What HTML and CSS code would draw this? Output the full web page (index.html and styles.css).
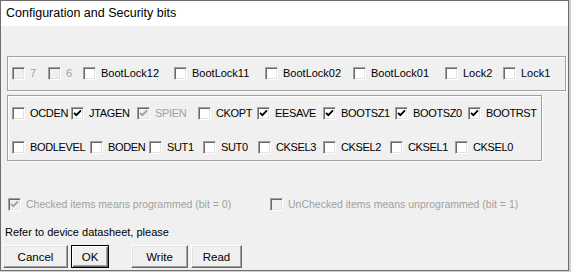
FILE: index.html
```html
<!DOCTYPE html>
<html lang="en">
<head>
    <meta charset="UTF-8">
    <title>Configuration and Security bits</title>
    <link rel="stylesheet" href="styles.css">
</head>
<body>
    <div class="window">
        <div class="titlebar">Configuration and Security bits</div>
        <div class="client">
            <div class="group lock-group">
                <div class="bits lock-bits">
                    <label class="bit disabled"><span class="box"></span>7</label>
                    <label class="bit disabled"><span class="box"></span>6</label>
                    <label class="bit"><span class="box"></span>BootLock12</label>
                    <label class="bit"><span class="box"></span>BootLock11</label>
                    <label class="bit"><span class="box"></span>BootLock02</label>
                    <label class="bit"><span class="box"></span>BootLock01</label>
                    <label class="bit"><span class="box"></span>Lock2</label>
                    <label class="bit"><span class="box"></span>Lock1</label>
                </div>
            </div>

            <div class="group fuse-group">
                <div class="bits fuse-high">
                    <label class="bit"><span class="box"></span>OCDEN</label>
                    <label class="bit"><span class="box"><svg class="tick" viewBox="0 0 9 9"><path d="M1 3.8 L3.3 6.1 L8 1.4"/></svg></span>JTAGEN</label>
                    <label class="bit disabled"><span class="box"><svg class="tick" viewBox="0 0 9 9"><path d="M1 3.8 L3.3 6.1 L8 1.4"/></svg></span>SPIEN</label>
                    <label class="bit"><span class="box"></span>CKOPT</label>
                    <label class="bit"><span class="box"><svg class="tick" viewBox="0 0 9 9"><path d="M1 3.8 L3.3 6.1 L8 1.4"/></svg></span>EESAVE</label>
                    <label class="bit"><span class="box"><svg class="tick" viewBox="0 0 9 9"><path d="M1 3.8 L3.3 6.1 L8 1.4"/></svg></span>BOOTSZ1</label>
                    <label class="bit"><span class="box"><svg class="tick" viewBox="0 0 9 9"><path d="M1 3.8 L3.3 6.1 L8 1.4"/></svg></span>BOOTSZ0</label>
                    <label class="bit"><span class="box"><svg class="tick" viewBox="0 0 9 9"><path d="M1 3.8 L3.3 6.1 L8 1.4"/></svg></span>BOOTRST</label>
                </div>
                <div class="bits fuse-low">
                    <label class="bit"><span class="box"></span>BODLEVEL</label>
                    <label class="bit"><span class="box"></span>BODEN</label>
                    <label class="bit"><span class="box"></span>SUT1</label>
                    <label class="bit"><span class="box"></span>SUT0</label>
                    <label class="bit"><span class="box"></span>CKSEL3</label>
                    <label class="bit"><span class="box"></span>CKSEL2</label>
                    <label class="bit"><span class="box"></span>CKSEL1</label>
                    <label class="bit"><span class="box"></span>CKSEL0</label>
                </div>
            </div>

            <div class="bits legend">
                <label class="bit disabled"><span class="box"><svg class="tick" viewBox="0 0 9 9"><path d="M1 3.8 L3.3 6.1 L8 1.4"/></svg></span>Checked items means programmed (bit = 0)</label>
                <label class="bit disabled"><span class="box"></span>UnChecked items means unprogrammed (bit = 1)</label>
            </div>

            <div class="note">Refer to device datasheet, please</div>

            <div class="buttons">
                <button class="btn btn-cancel">Cancel</button>
                <button class="btn btn-ok default">OK</button>
                <button class="btn btn-write">Write</button>
                <button class="btn btn-read">Read</button>
            </div>
        </div>
    </div>
</body>
</html>
```

FILE: styles.css
```css
body {
    margin: 0;
    background: #cfcfcf;
    font-family: "Liberation Sans", Arial, sans-serif;
    font-size: 11px;
    color: #000;
}
.window {
    width: 569px;
    height: 271px;
    box-sizing: border-box;
    border: 1px solid #6e6e6e;
    background: #f0f0f0;
    display: flex;
    flex-direction: column;
}
.titlebar {
    height: 25px;
    line-height: 25px;
    background: #fff;
    padding-left: 5px;
    font-size: 12.5px;
}
.client {
    flex: 1;
    display: flex;
    flex-direction: column;
    align-items: flex-start;
}
.group {
    box-sizing: border-box;
    border: 1px solid #a0a0a0;
    box-shadow: inset 1px 1px #fff, 1px 1px #fff;
}
.lock-group {
    margin: 30px 0 0 6px;
    width: 559px;
    height: 35px;
    padding: 10px 0 0 4px;
}
.fuse-group {
    margin: 4px 0 0 6px;
    width: 535px;
    height: 66px;
    padding: 11px 0 0 4px;
    display: flex;
    flex-direction: column;
    gap: 21px;
    letter-spacing: -0.35px;
}
.bits {
    display: grid;
    height: 13px;
    align-items: center;
}
.lock-bits {
    grid-template-columns: 36px 35px 91px 91px 88px 92px 58px auto;
}
.fuse-high {
    grid-template-columns: 59px 66px 61px 59px 66px 72px 73px auto;
}
.fuse-low {
    grid-template-columns: 78px 59px 54px 55px 65px 67px 65px auto;
}
.bit {
    display: flex;
    align-items: center;
    gap: 5px;
    white-space: nowrap;
    line-height: 13px;
}
.box {
    width: 13px;
    height: 13px;
    box-sizing: border-box;
    flex: none;
    background: #fff;
    border: 1px solid;
    border-color: #a0a0a0 #fff #fff #a0a0a0;
    box-shadow: inset 1px 1px #696969, inset -1px -1px #e3e3e3;
    display: flex;
    align-items: center;
    justify-content: center;
}
.tick {
    width: 9px;
    height: 9px;
    fill: none;
    stroke: #000;
    stroke-width: 1.9;
}
.disabled {
    color: #a0a0a0;
}
.disabled .box {
    background: #f0f0f0;
}
.disabled .tick {
    stroke: #a0a0a0;
}
.legend {
    margin: 37px 0 0 7px;
    grid-template-columns: 262px auto;
    font-size: 10.5px;
}
.note {
    margin: 14px 0 0 4px;
    line-height: 14px;
    font-size: 11px;
}
.buttons {
    margin: 6px 0 0 2px;
    display: flex;
    gap: 3px;
}
.btn {
    height: 23px;
    box-sizing: border-box;
    padding: 0;
    font-family: inherit;
    font-size: 11.5px;
    color: #000;
    background: #f0f0f0;
    border: 1px solid;
    border-color: #fff #696969 #696969 #fff;
    box-shadow: inset -1px -1px #a0a0a0, inset 1px 1px #e3e3e3;
}
.btn.default {
    outline: 1px solid #000;
    outline-offset: -1px;
    border-color: #000;
    box-shadow: inset 1px 1px #fff, inset -1px -1px #696969, inset -2px -2px #a0a0a0;
}
.btn-cancel { width: 65px; }
.btn-ok { width: 38px; }
.btn-write { width: 57px; margin-left: 19px; }
.btn-read { width: 51px; }
```
